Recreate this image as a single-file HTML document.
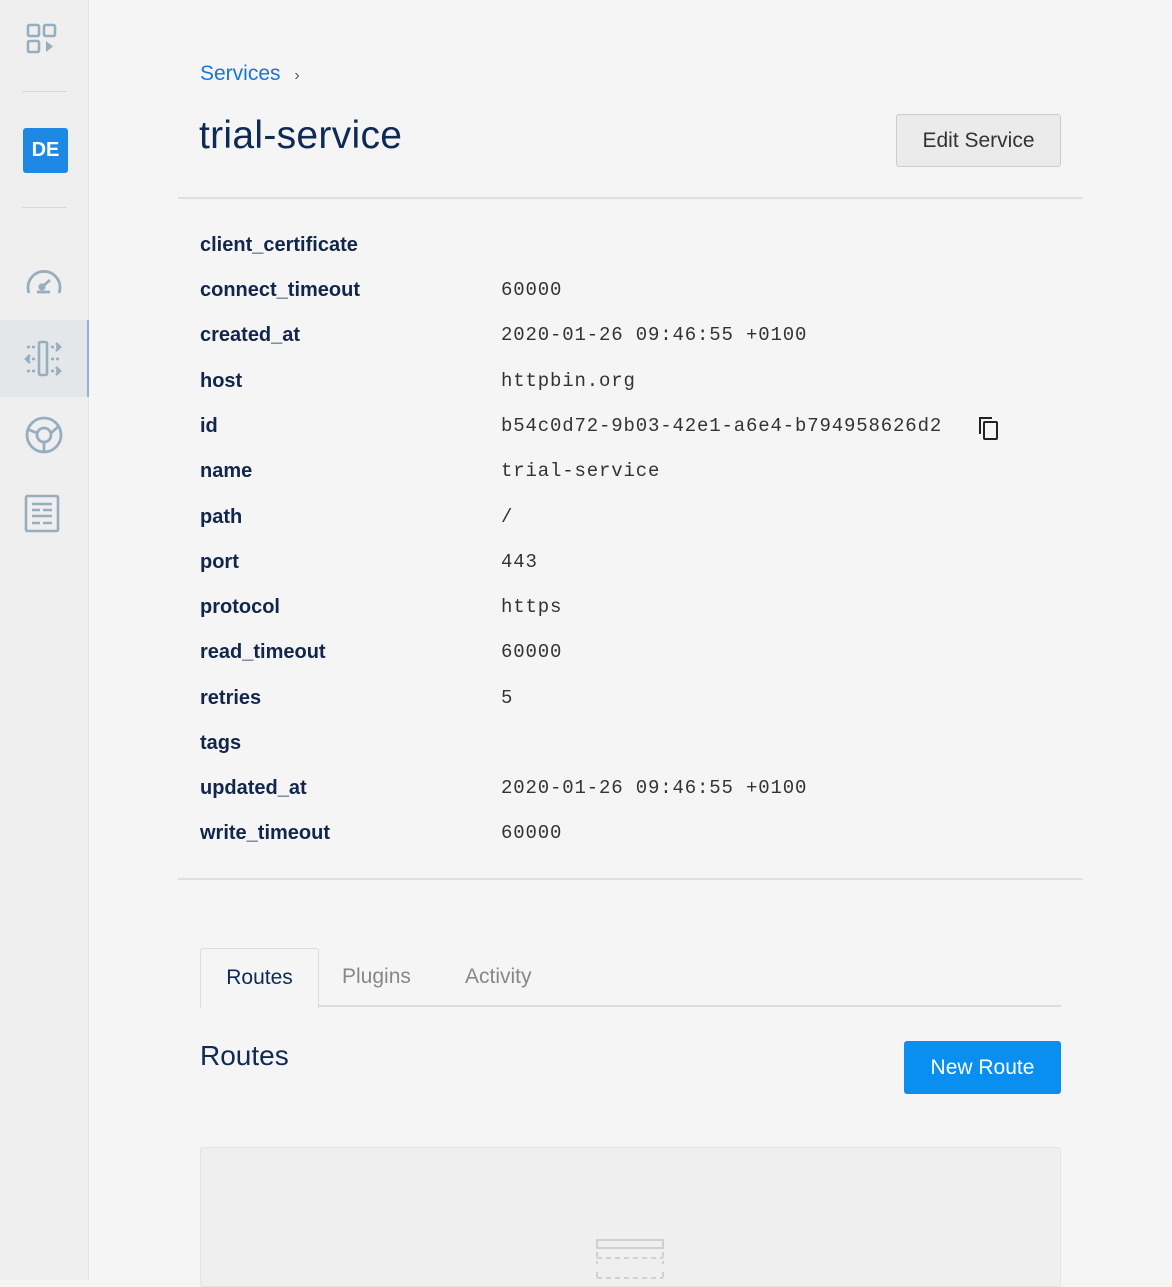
<!DOCTYPE html>
<html><head><style>
*{margin:0;padding:0;box-sizing:border-box}
body{width:1172px;height:1280px;background:#f5f5f5;font-family:"Liberation Sans",sans-serif;position:relative;overflow:hidden}
.side{position:absolute;left:0;top:0;width:89px;height:1280px;background:#efefef;border-right:1px solid #e2e2e2}
.hr{position:absolute;left:22px;width:45px;height:1px;background:#d8d8d8}
.de{position:absolute;left:23px;top:128px;width:45px;height:45px;background:#1e88e5;border-radius:3px;color:#fff;font-weight:bold;font-size:20px;text-align:center;line-height:45px}
.act{position:absolute;left:0;top:320px;width:89px;height:77px;background:#e4e7ea;border-right:2px solid #8fb2de}
.ic{position:absolute;left:22px}
.abs{position:absolute}
.crumb{left:200px;top:62px;font-size:21px;color:#1976d2}
.title{left:199px;top:114px;font-size:39px;color:#0e2a55;letter-spacing:0.3px}
.edit{left:896px;top:114px;width:165px;height:53px;border:1px solid #ccc;background:#ebebeb;border-radius:3px;font-size:21px;color:#333;text-align:center;line-height:51px}
.line{left:178px;width:905px;height:2px;background:#e0e0e0}
.lbl{left:200px;font-size:20px;font-weight:bold;color:#12264a}
.val{left:501px;font-family:"Liberation Mono",monospace;font-size:19px;letter-spacing:0.85px;color:#333}
.tab{top:948px;height:58px;font-size:21px;line-height:58px}
</style></head><body>
<div class="side">
<svg class="ic" style="top:22px" width="40" height="36" viewBox="0 0 40 36" fill="none" stroke="#97aebf" stroke-width="2.6"><rect x="6" y="3" width="11" height="11" rx="1.5"/><rect x="22" y="3" width="11" height="11" rx="1.5"/><rect x="6" y="19" width="11" height="11" rx="1.5"/><path d="M24 19l7 5.5-7 5.5z" fill="#97aebf" stroke="none"/></svg>
<div class="hr" style="top:91px"></div>
<div class="de">DE</div>
<div class="hr" style="top:207px"></div>
<svg class="ic" style="top:262px" width="44" height="38" viewBox="0 0 44 38" fill="none" stroke="#97aebf" stroke-width="2.8"><path d="M7 31A16 16 0 1 1 37 31"/><path d="M20 25l8-7"/><circle cx="20" cy="25" r="2.2" fill="#97aebf"/><path d="M15 30h13"/></svg>
<div class="act"></div>
<svg class="ic" style="top:340px" width="44" height="38" viewBox="0 0 44 38" fill="none" stroke="#97aebf" stroke-width="2.6"><rect x="17" y="2" width="8" height="33" rx="1.5"/><path d="M5 7h8M5 19h3M10 19h4M5 31h8M29 7h7M29 19h9M29 31h7" stroke-dasharray="3 2"/><path d="M34 3l4 4-4 4M8 15l-4 4 4 4M34 27l4 4-4 4"/></svg>
<svg class="ic" style="top:414px" width="44" height="42" viewBox="0 0 44 42" fill="none" stroke="#97aebf" stroke-width="2.8"><circle cx="22" cy="21" r="17"/><circle cx="22" cy="21" r="7"/><path d="M22 28v10M15 19l-10-4M29 19l8-7"/></svg>
<svg class="ic" style="top:494px" width="44" height="40" viewBox="0 0 44 40" fill="none" stroke="#97aebf" stroke-width="2.6"><rect x="4" y="2" width="32" height="35" rx="1.5"/><path d="M10 10h20M10 16h8M21 16h9M10 22h20M10 29h8M21 29h9"/></svg>
</div>
<div class="abs crumb">Services <span style="color:#555;font-size:16px;margin-left:8px">›</span></div>
<div class="abs title">trial-service</div>
<div class="abs edit">Edit Service</div>
<div class="abs line" style="top:197px"></div>
<div class="abs lbl" style="top:234px">client_certificate</div>
<div class="abs lbl" style="top:279px">connect_timeout</div><div class="abs val" style="top:279px">60000</div>
<div class="abs lbl" style="top:324px">created_at</div><div class="abs val" style="top:324px">2020-01-26 09:46:55 +0100</div>
<div class="abs lbl" style="top:370px">host</div><div class="abs val" style="top:370px">httpbin.org</div>
<div class="abs lbl" style="top:415px">id</div><div class="abs val" style="top:415px">b54c0d72-9b03-42e1-a6e4-b794958626d2</div>
<svg class="abs" style="left:977px;top:415px" width="24" height="26" viewBox="0 0 24 26" fill="none" stroke="#222" stroke-width="2"><path d="M3 19V3h12"/><rect x="7" y="7" width="13" height="17" rx="1"/></svg>
<div class="abs lbl" style="top:460px">name</div><div class="abs val" style="top:460px">trial-service</div>
<div class="abs lbl" style="top:506px">path</div><div class="abs val" style="top:506px">/</div>
<div class="abs lbl" style="top:551px">port</div><div class="abs val" style="top:551px">443</div>
<div class="abs lbl" style="top:596px">protocol</div><div class="abs val" style="top:596px">https</div>
<div class="abs lbl" style="top:641px">read_timeout</div><div class="abs val" style="top:641px">60000</div>
<div class="abs lbl" style="top:687px">retries</div><div class="abs val" style="top:687px">5</div>
<div class="abs lbl" style="top:732px">tags</div>
<div class="abs lbl" style="top:777px">updated_at</div><div class="abs val" style="top:777px">2020-01-26 09:46:55 +0100</div>
<div class="abs lbl" style="top:822px">write_timeout</div><div class="abs val" style="top:822px">60000</div>
<div class="abs line" style="top:878px"></div>
<div class="abs" style="left:200px;top:1005px;width:861px;height:2px;background:#ddd"></div>
<div class="abs tab" style="left:200px;width:119px;border:1px solid #ddd;border-bottom:none;border-radius:3px 3px 0 0;background:#f5f5f5;height:60px;color:#0e2a55;text-align:center">Routes</div>
<div class="abs tab" style="left:342px;color:#888">Plugins</div>
<div class="abs tab" style="left:465px;color:#888">Activity</div>
<div class="abs" style="left:200px;top:1040px;font-size:28px;color:#0e2a55">Routes</div>
<div class="abs" style="left:904px;top:1041px;width:157px;height:53px;background:#0a8ff0;border-radius:3px;color:#fff;font-size:21px;text-align:center;line-height:53px">New Route</div>
<div class="abs" style="left:200px;top:1147px;width:861px;height:140px;background:#efefef;border:1px solid #e4e4e4;border-radius:3px"></div>
<svg class="abs" style="left:596px;top:1238px" width="70" height="42" viewBox="0 0 70 42" fill="none" stroke="#d0d0d0" stroke-width="2"><rect x="1" y="2" width="66" height="8"/><path d="M1 14v12M67 14v12M1 20h66M1 34v10M67 34v10M1 40h66" stroke-dasharray="5 4"/></svg>
</body></html>
